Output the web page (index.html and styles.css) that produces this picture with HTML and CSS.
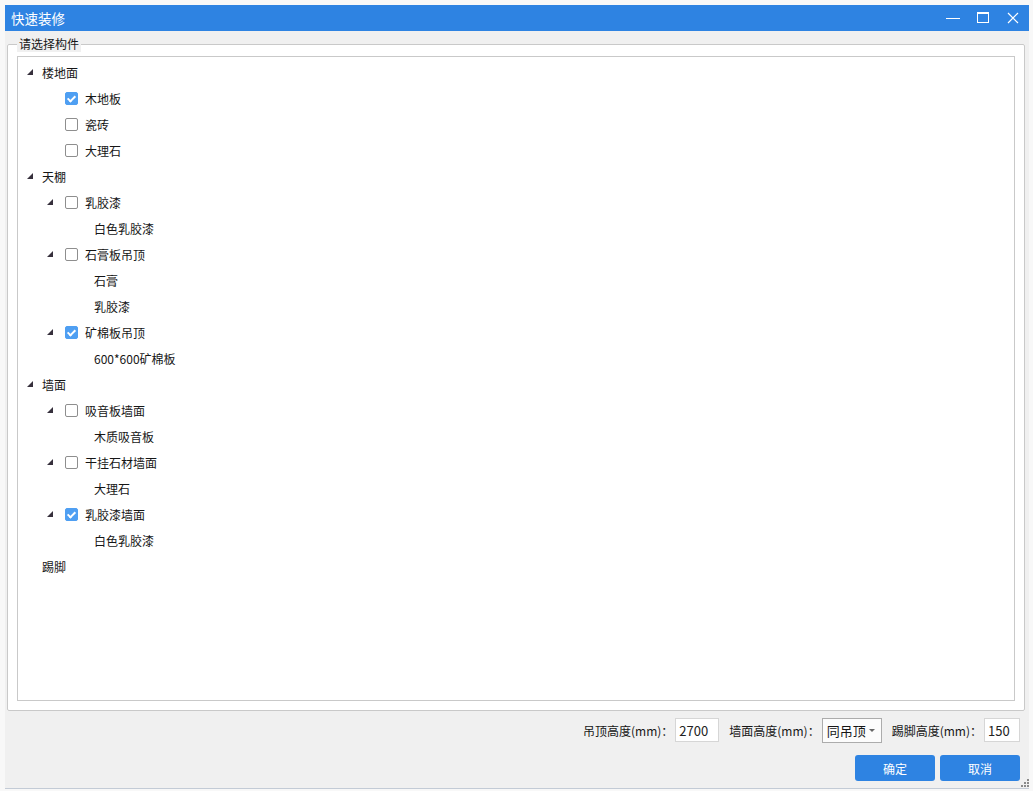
FILE: index.html
```html
<!DOCTYPE html>
<html lang="zh-CN">
<head>
  <meta charset="UTF-8">
  <title>快速装修</title>
  <link rel="stylesheet" href="styles.css">
</head>
<body>
  <div class="window">
    <div class="titlebar">
      <span class="title">快速装修</span>
      <div class="win-btns">
        <svg class="win-btn" width="16" height="16" viewBox="0 0 16 16"><path d="M1 8.5h14" stroke="#fff" stroke-width="1"/></svg>
        <svg class="win-btn" width="16" height="16" viewBox="0 0 16 16"><rect x="2.5" y="2.5" width="11" height="10" fill="none" stroke="#fff" stroke-width="1"/><path d="M2 3h12" stroke="#fff" stroke-width="2"/></svg>
        <svg class="win-btn" width="16" height="16" viewBox="0 0 16 16"><path d="M3 3l10 10M13 3L3 13" stroke="#fff" stroke-width="1.2"/></svg>
      </div>
    </div>

    <fieldset class="group">
      <legend>请选择构件</legend>
      <div class="tree">
        <div class="row lv0"><span class="toggle open"></span><span class="label">楼地面</span></div>
        <div class="row lv1"><span class="toggle"></span><span class="check on"></span><span class="label">木地板</span></div>
        <div class="row lv1"><span class="toggle"></span><span class="check"></span><span class="label">瓷砖</span></div>
        <div class="row lv1"><span class="toggle"></span><span class="check"></span><span class="label">大理石</span></div>
        <div class="row lv0"><span class="toggle open"></span><span class="label">天棚</span></div>
        <div class="row lv1"><span class="toggle open"></span><span class="check"></span><span class="label">乳胶漆</span></div>
        <div class="row lv2"><span class="label">白色乳胶漆</span></div>
        <div class="row lv1"><span class="toggle open"></span><span class="check"></span><span class="label">石膏板吊顶</span></div>
        <div class="row lv2"><span class="label">石膏</span></div>
        <div class="row lv2"><span class="label">乳胶漆</span></div>
        <div class="row lv1"><span class="toggle open"></span><span class="check on"></span><span class="label">矿棉板吊顶</span></div>
        <div class="row lv2"><span class="label">600*600矿棉板</span></div>
        <div class="row lv0"><span class="toggle open"></span><span class="label">墙面</span></div>
        <div class="row lv1"><span class="toggle open"></span><span class="check"></span><span class="label">吸音板墙面</span></div>
        <div class="row lv2"><span class="label">木质吸音板</span></div>
        <div class="row lv1"><span class="toggle open"></span><span class="check"></span><span class="label">干挂石材墙面</span></div>
        <div class="row lv2"><span class="label">大理石</span></div>
        <div class="row lv1"><span class="toggle open"></span><span class="check on"></span><span class="label">乳胶漆墙面</span></div>
        <div class="row lv2"><span class="label">白色乳胶漆</span></div>
        <div class="row lv0"><span class="toggle"></span><span class="label">踢脚</span></div>
      </div>
    </fieldset>

    <div class="params">
      <label>吊顶高度(mm)：</label>
      <input class="num" type="text" value="2700">
      <label>墙面高度(mm)：</label>
      <div class="select"><span>同吊顶</span><span class="arrow"></span></div>
      <label>踢脚高度(mm)：</label>
      <input class="num short" type="text" value="150">
    </div>

    <div class="actions">
      <button class="btn">确定</button>
      <button class="btn">取消</button>
    </div>

    <svg class="grip" width="8" height="8" viewBox="0 0 8 8">
      <rect x="6" y="0" width="2" height="2" fill="#8a8a8a"/>
      <rect x="3" y="3" width="2" height="2" fill="#8a8a8a"/>
      <rect x="6" y="3" width="2" height="2" fill="#8a8a8a"/>
      <rect x="0" y="6" width="2" height="2" fill="#8a8a8a"/>
      <rect x="3" y="6" width="2" height="2" fill="#8a8a8a"/>
      <rect x="6" y="6" width="2" height="2" fill="#8a8a8a"/>
    </svg>
  </div>
</body>
</html>
```

FILE: styles.css
```css
body {
  margin: 0;
  padding: 5px 4px 2px 5px;
  background-color: #f8f8f8;
  font-family: "Noto Sans CJK SC", "Liberation Sans", sans-serif;
  font-size: 12px;
  color: #161616;
}

.window {
  position: relative;
  width: 1024px;
  height: 784px;
  box-sizing: border-box;
  background-color: #f0f0f0;
  border-bottom: 1px solid #c3cbd6;
  display: flex;
  flex-direction: column;
}

/* barra de titulo */
.titlebar {
  height: 26px;
  background-color: #2e83e2;
  color: white;
  display: flex;
  align-items: center;
  justify-content: space-between;
  padding-left: 6px;
}

.title {
  font-size: 13.5px;
}

.win-btns {
  display: flex;
  gap: 14px;
  padding-right: 8px;
}

.win-btn {
  display: block;
}

/* grupo */
.group {
  flex: 1;
  margin: 5px 4px 0 2px;
  padding: 4px 9px 9px 9px;
  border: 1px solid #c9c9c9;
  border-radius: 2px;
  background-color: white;
  display: flex;
  min-height: 0;
}

.group legend {
  padding: 0 2px;
  line-height: 16px;
  background-color: #f0f0f0;
  color: #161616;
}

.tree {
  flex: 1;
  border: 1px solid #c9c9c9;
  padding-top: 2px;
}

.row {
  height: 26px;
  display: flex;
  align-items: center;
}

.lv0 { padding-left: 9px; }
.lv1 { padding-left: 29px; }
.lv2 { padding-left: 76px; }

.lv0 .toggle { width: 15px; }
.lv1 .toggle { width: 18px; }

.toggle {
  height: 6px;
  flex-shrink: 0;
}

.toggle.open::before {
  content: "";
  display: block;
  width: 0;
  height: 0;
  border-left: 6px solid transparent;
  border-bottom: 6px solid #36303c;
}

.check {
  width: 13px;
  height: 13px;
  box-sizing: border-box;
  border: 1px solid #8e8e8e;
  border-radius: 2px;
  background-color: white;
  margin-right: 7px;
  flex-shrink: 0;
  position: relative;
}

.check.on {
  border-color: #4f9ff2;
  background-color: #4f9ff2;
}

.check.on::after {
  content: "";
  position: absolute;
  left: 3px;
  top: 1px;
  width: 3px;
  height: 6px;
  border-right: 2px solid white;
  border-bottom: 2px solid white;
  transform: rotate(45deg);
}

.label {
  white-space: nowrap;
}

/* parametros */
.params {
  display: flex;
  justify-content: flex-end;
  align-items: center;
  padding: 7px 9px 0 0;
  height: 24px;
}

.params label {
  margin-right: 2px;
}

.num {
  width: 44px;
  height: 24px;
  box-sizing: border-box;
  border: 1px solid #d6d6d6;
  background-color: white;
  font-family: "Noto Sans CJK SC", "Liberation Sans", sans-serif;
  font-size: 13px;
  color: #222;
  padding: 0 3px;
  margin-right: 10px;
  outline: none;
}

.num.short {
  width: 36px;
  margin-right: 0;
}

.select {
  width: 60px;
  height: 25px;
  box-sizing: border-box;
  border: 1px solid #acacac;
  background-color: #fcfcfc;
  display: flex;
  align-items: center;
  justify-content: space-between;
  padding: 0 6px 0 4px;
  font-size: 13px;
  margin-right: 10px;
}

.arrow {
  width: 0;
  height: 0;
  border-left: 3px solid transparent;
  border-right: 3px solid transparent;
  border-top: 3px solid #666;
}

/* botones */
.actions {
  display: flex;
  justify-content: flex-end;
  gap: 5px;
  padding: 13px 9px 0 0;
  height: 26px;
  margin-bottom: 7px;
}

.btn {
  width: 80px;
  height: 26px;
  border: none;
  border-radius: 3px;
  background-color: #2e83e2;
  color: white;
  font-family: "Noto Sans CJK SC", "Liberation Sans", sans-serif;
  font-size: 12px;
  cursor: pointer;
}

.grip {
  position: absolute;
  right: 0;
  bottom: 1px;
}
```
